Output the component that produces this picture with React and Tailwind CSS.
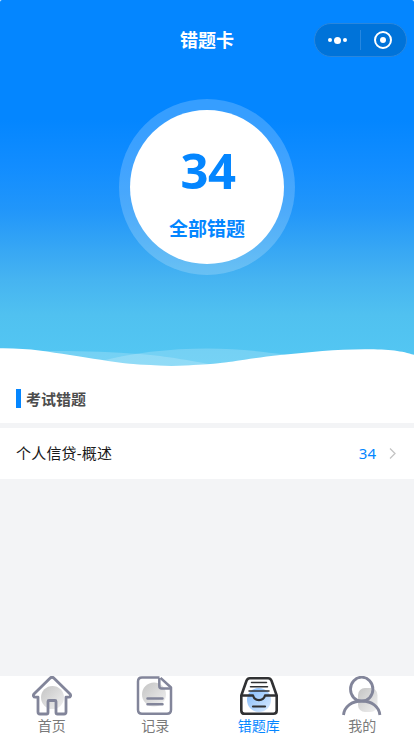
import { useState } from 'react';

const HomeIcon = () => (
  <svg width="40" height="40" viewBox="0 0 40 40" fill="none">
    <circle cx="20.5" cy="21.5" r="11.5" fill="url(#grayBall)" />
    <path
      d="M18 2.2 2.2 17.8c-1.6 1.7-.6 3.4 1.2 3.4H6V36c0 1.3.7 2 2 2h6.5c1 0 1.5-.5 1.5-1.5v-11c0-.6.4-1 1-1h6c.6 0 1 .4 1 1v11c0 1 .5 1.5 1.5 1.5H32c1.3 0 2-.7 2-2V21.200h2.600c1.800 0 2.800-1.700 1.200-3.400L22 2.200c-1.200-1.200-2.800-1.200-4 0Z"
      stroke="#82859a"
      strokeWidth="2.8"
      strokeLinejoin="round"
    />
  </svg>
);

const RecordIcon = () => (
  <svg width="40" height="40" viewBox="0 0 40 40" fill="none">
    <circle cx="19" cy="18.5" r="12" fill="url(#grayBall)" />
    <path
      d="M24.5 1.5H7C4.5 1.5 3 3 3 5.5v28.3c0 2.5 1.5 4 4 4h25c2.5 0 4-1.5 4-4V11.5L25.5 1.8"
      stroke="#82859a"
      strokeWidth="2.5"
      strokeLinejoin="round"
    />
    <path d="M24.3 2v8c0 1.7.8 2.5 2.5 2.5h8.5" stroke="#82859a" strokeWidth="2.5" />
    <path d="M12.5 22.5h15M12.5 28.3h15" stroke="#82859a" strokeWidth="2.5" strokeLinecap="round" />
  </svg>
);

const WrongIcon = () => (
  <svg width="40" height="40" viewBox="0 0 40 40" fill="none">
    <circle cx="20" cy="24" r="12" fill="url(#blueBall)" />
    <path
      d="M2.3 19.5 7.5 4.8C8.2 2.9 9 2.3 10.8 2.3h18.4c1.8 0 2.6.6 3.3 2.5l5.2 14.7v15c0 2.3-1 3.3-3.3 3.3H5.6c-2.3 0-3.3-1-3.3-3.3Z"
      stroke="#303133"
      strokeWidth="2.6"
      strokeLinejoin="round"
    />
    <path
      d="M2.3 19.5H14c.8 3 2.9 4.6 6 4.6s5.2-1.6 6-4.6h11.7"
      stroke="#303133"
      strokeWidth="2.3"
      strokeLinejoin="round"
    />
    <path d="M12.5 6.5h15M11.5 10.7h17M10 15h20" stroke="#303133" strokeWidth="1.5" strokeLinecap="round" />
    <path d="M14 30.5h12" stroke="#303133" strokeWidth="2.2" strokeLinecap="round" />
  </svg>
);

const MineIcon = () => (
  <svg width="40" height="40" viewBox="0 0 40 40" fill="none">
    <rect x="16" y="12" width="19.5" height="24" rx="7" fill="url(#grayBall)" />
    <ellipse cx="19.7" cy="13.2" rx="11.2" ry="12" stroke="#82859a" strokeWidth="2.8" />
    <path d="M1.5 39c.8-8.3 8.2-14 18.200-14s17.400 5.700 18.200 14" stroke="#82859a" strokeWidth="2.8" />
  </svg>
);

const tabs = [
  { key: 'home', label: '首页', Icon: HomeIcon },
  { key: 'record', label: '记录', Icon: RecordIcon },
  { key: 'wrong', label: '错题库', Icon: WrongIcon },
  { key: 'mine', label: '我的', Icon: MineIcon },
];

const exams = [{ id: 1, name: '个人信贷-概述', count: 34 }];

// Gradients shared by the tab icons
const IconDefs = () => (
  <svg className="absolute" width="0" height="0">
    <defs>
      <linearGradient id="grayBall" x1="0" y1="0" x2="1" y2="1">
        <stop offset="0" stopColor="#c4c4c4" />
        <stop offset="1" stopColor="#f1f1f1" />
      </linearGradient>
      <linearGradient id="blueBall" x1="0" y1="0" x2="1" y2="1">
        <stop offset="0" stopColor="#7fb9fb" />
        <stop offset="1" stopColor="#dcecff" />
      </linearGradient>
    </defs>
  </svg>
);

const Wave = () => (
  <svg className="block w-full" height="20" viewBox="0 0 414 20" preserveAspectRatio="none">
    <path d="M30 3C75 2.5 110 3.5 140 6S185 12 212 16.5L160 18 100 14Z" fill="#fff" fillOpacity="0.2" />
    <path d="M98 14C130 5 170 .7 207 .6 235 .6 258 3 285 6.5L207 17H150Z" fill="#fff" fillOpacity="0.2" />
    <path
      d="M0 .3C30 0 48 4 70 7S110 14 130 15.8C155 18 180 18.3 207 16.3 235 14 255 9.5 280 7 310 4 335 1.3 365 1.2 390 1.2 402 3 414 6.8V20H0Z"
      fill="#fff"
    />
  </svg>
);

const Capsule = () => (
  <div className="absolute right-[7px] top-[23px] flex h-[34px] w-[93px] items-center rounded-full border border-[#2a86dc] bg-[#0073d9]">
    <div className="flex w-[45px] items-center justify-center gap-[2px] pr-[1px]">
      <span className="h-1 w-1 rounded-full bg-white" />
      <span className="h-[7px] w-[7px] rounded-full bg-white" />
      <span className="h-1 w-1 rounded-full bg-white" />
    </div>
    <div className="h-5 w-px bg-[#2687e0]" />
    <div className="flex flex-1 items-center justify-center pr-[1px]">
      <div className="flex h-[18px] w-[18px] items-center justify-center rounded-full border-2 border-white">
        <span className="h-[6px] w-[6px] rounded-full bg-white" />
      </div>
    </div>
  </div>
);

const App = () => {
  const [active, setActive] = useState('wrong');

  return (
    <div className="flex h-[736px] w-full flex-col overflow-hidden bg-[#f3f4f6] font-['Noto_Sans','Noto_Sans_CJK_SC',sans-serif]">
      <IconDefs />
      <div className="bg-white">
        <header className="relative flex h-[368px] flex-col items-center overflow-hidden rounded-t-[2px] bg-[linear-gradient(180deg,#0486ff_0px,#0486ff_120px,#128dff_167px,#2196fa_210px,#37a7f4_250px,#46b4f1_280px,#50c1f0_315px,#54c8f3_368px)]">
          <h1 className="mt-[26px] h-7 text-[18px] font-bold leading-7 text-white">错题卡</h1>
          <Capsule />
          <div className="mt-[45px] flex h-[176px] w-[176px] items-center justify-center rounded-full bg-white/20">
            <div className="flex h-[154px] w-[154px] flex-col items-center rounded-full bg-white text-[#0486ff]">
              <span className="mt-[30px] h-[60px] pl-[2px] text-[49px] font-bold leading-[60px] tracking-[-0.5px]">34</span>
              <span className="mt-[15px] text-[19px] font-bold leading-7">全部错题</span>
            </div>
          </div>
          <div className="mt-auto w-full">
            <Wave />
          </div>
        </header>
        <div className="flex h-[55px] items-center px-4 pt-[6px]">
          <span className="h-[19px] w-[5px] bg-[#0486ff]" />
          <h2 className="ml-[5px] text-[15px] font-bold leading-5 text-[#4d4d4d]">考试错题</h2>
        </div>
      </div>

      <div className="mt-[5px]">
        {exams.map((exam) => (
          <div key={exam.id} className="flex h-[51px] items-center bg-white px-4">
            <span className="flex-1 text-[15px] tracking-[0.2px] text-[#1a1a1a]">{exam.name}</span>
            <span className="text-[15px] text-[#0486ff]">{exam.count}</span>
            <svg className="ml-3" width="10" height="12" viewBox="0 0 10 12" fill="none">
              <path d="m2 .5 5 5-5 5" stroke="#c4c4c4" strokeWidth="1.3" />
            </svg>
          </div>
        ))}
      </div>

      <nav className="mt-auto grid h-[60px] grid-cols-4 bg-white">
        {tabs.map(({ key, label, Icon }) => (
          <button key={key} onClick={() => setActive(key)} className="flex flex-col items-center">
            <Icon />
            <span className={`text-[14px] leading-5 ${active === key ? 'text-[#0486ff]' : 'text-[#7a7a7a]'}`}>
              {label}
            </span>
          </button>
        ))}
      </nav>
    </div>
  );
};

export default App;
